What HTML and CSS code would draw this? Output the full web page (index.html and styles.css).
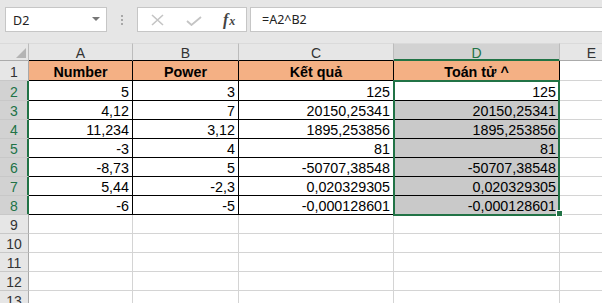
FILE: index.html
```html
<!DOCTYPE html>
<html lang="vi">
<head>
  <meta charset="UTF-8">
  <title>Toán tử ^</title>
  <link rel="stylesheet" href="styles.css">
</head>
<body>
  <div class="formula-bar">
    <div class="name-box">
      <span>D2</span>
      <span class="caret"></span>
    </div>
    <div class="grip"><i></i><i></i><i></i></div>
    <div class="fx-buttons">
      <svg width="13" height="12" viewBox="0 0 13 12"><path d="M1 1 L12 11 M12 1 L1 11" stroke="#c4c4c4" stroke-width="1.6" fill="none"/></svg>
      <svg width="16" height="10" viewBox="0 0 16 10"><path d="M1 5 L5.5 9 L15 1" stroke="#c4c4c4" stroke-width="1.8" fill="none"/></svg>
      <span class="fx"><i>f</i><span class="x">x</span></span>
    </div>
    <div class="formula">=A2^B2</div>
  </div>

  <div class="sheet">
    <!-- column headers -->
    <div class="corner"><span class="tri"></span></div>
    <div class="ch tb">A</div>
    <div class="ch tb">B</div>
    <div class="ch tb">C</div>
    <div class="ch tb on">D</div>
    <div class="ch">E</div>

    <div class="rh">1</div>
    <div class="cell tb hd">Number</div>
    <div class="cell tb hd">Power</div>
    <div class="cell tb hd">Kết quả</div>
    <div class="cell tb hd">Toán tử ^</div>
    <div class="cell"></div>

    <div class="rh on">2</div>
    <div class="cell tb n">5</div>
    <div class="cell tb n">3</div>
    <div class="cell tb n">125</div>
    <div class="cell tb n">125</div>
    <div class="cell"></div>

    <div class="rh on">3</div>
    <div class="cell tb n">4,12</div>
    <div class="cell tb n">7</div>
    <div class="cell tb n">20150,25341</div>
    <div class="cell tb n sel">20150,25341</div>
    <div class="cell"></div>

    <div class="rh on">4</div>
    <div class="cell tb n">11,234</div>
    <div class="cell tb n">3,12</div>
    <div class="cell tb n">1895,253856</div>
    <div class="cell tb n sel">1895,253856</div>
    <div class="cell"></div>

    <div class="rh on">5</div>
    <div class="cell tb n">-3</div>
    <div class="cell tb n">4</div>
    <div class="cell tb n">81</div>
    <div class="cell tb n sel">81</div>
    <div class="cell"></div>

    <div class="rh on">6</div>
    <div class="cell tb n">-8,73</div>
    <div class="cell tb n">5</div>
    <div class="cell tb n">-50707,38548</div>
    <div class="cell tb n sel">-50707,38548</div>
    <div class="cell"></div>

    <div class="rh on">7</div>
    <div class="cell tb n">5,44</div>
    <div class="cell tb n">-2,3</div>
    <div class="cell tb n">0,020329305</div>
    <div class="cell tb n sel">0,020329305</div>
    <div class="cell"></div>

    <div class="rh on">8</div>
    <div class="cell tb n">-6</div>
    <div class="cell tb n">-5</div>
    <div class="cell tb n">-0,000128601</div>
    <div class="cell tb n sel">-0,000128601</div>
    <div class="cell"></div>

    <div class="rh">9</div>
    <div class="cell"></div><div class="cell"></div><div class="cell"></div><div class="cell"></div><div class="cell"></div>
    <div class="rh">10</div>
    <div class="cell"></div><div class="cell"></div><div class="cell"></div><div class="cell"></div><div class="cell"></div>
    <div class="rh">11</div>
    <div class="cell"></div><div class="cell"></div><div class="cell"></div><div class="cell"></div><div class="cell"></div>
    <div class="rh">12</div>
    <div class="cell"></div><div class="cell"></div><div class="cell"></div><div class="cell"></div><div class="cell"></div>
    <div class="rh">13</div>
    <div class="cell"></div><div class="cell"></div><div class="cell"></div><div class="cell"></div><div class="cell"></div>

    <!-- selection D2:D8 -->
    <div class="selection"></div>
    <div class="fill-handle"></div>
  </div>
</body>
</html>
```

FILE: styles.css
```css
:root {
  --bar-bg: #e6e6e6;
  --box-border: #c6c6c6;
  --grid: #d4d4d4;
  --head-line: #bcbcbc;
  --excel-green: #217346;
  --head-on: #d2d2d2;
  --orange: #f4b084;
  --sel-gray: #c9c9c9;
}

* {
  box-sizing: border-box;
  margin: 0;
  padding: 0;
}

body {
  width: 602px;
  height: 303px;
  overflow: hidden;
  background: #fff;
  font-family: 'Liberation Sans', Arial, sans-serif;
  color: #000;
}

/* formula bar */
.formula-bar {
  display: flex;
  align-items: flex-start;
  height: 43px;
  padding: 7px 0 0 5px;
  background: var(--bar-bg);
  font-family: 'Noto Sans', 'Open Sans', sans-serif;
  font-size: 12.5px;
  color: #222;
}

.name-box {
  display: flex;
  align-items: center;
  justify-content: space-between;
  width: 102px;
  height: 25px;
  padding: 1px 6px 0 7px;
  background: #fff;
  border: 1px solid var(--box-border);
}

.caret {
  width: 0;
  height: 0;
  border-left: 4px solid transparent;
  border-right: 4px solid transparent;
  border-top: 4px solid #777;
  margin-top: -2px;
}

.grip {
  display: flex;
  flex-direction: column;
  align-items: center;
  gap: 2px;
  width: 30px;
  padding-top: 8px;
}

.grip i {
  width: 2px;
  height: 2px;
  background: #a8a8a8;
}

.fx-buttons {
  display: flex;
  align-items: center;
  width: 110px;
  height: 25px;
  padding: 0 0 0 13px;
  background: #fff;
  border: 1px solid var(--box-border);
  gap: 22px;
}

.fx-buttons svg {
  display: block;
}

.fx-buttons svg + svg {
  margin-top: 2px;
}

.fx {
  font-family: 'Liberation Serif', 'Times New Roman', serif;
  font-style: italic;
  font-size: 16px;
  color: #444;
  margin-left: -1px;
  margin-top: 1px;
}

.fx i {
  font-weight: bold;
}

.fx .x {
  font-size: 12px;
  font-weight: bold;
  margin-left: 1px;
}

.formula {
  flex: 1;
  height: 25px;
  margin-left: 3px;
  padding: 3px 0 0 11px;
  background: #fff;
  border: 1px solid var(--box-border);
  border-right: none;
}

/* sheet grid */
.sheet {
  position: relative;
  display: grid;
  grid-template-columns: 29px 104px 106px 155px 166px 64px;
  grid-template-rows: 18px 20px 20px repeat(11, 19px);
  font-size: 14.3px;
}

.corner,
.ch,
.rh {
  background: var(--bar-bg);
  font-size: 14px;
  color: #333;
}

.corner {
  position: relative;
  border-right: 1px solid var(--head-line);
  border-bottom: 1px solid #ababab;
  border-top: 1px solid #dadada;
}

.tri {
  position: absolute;
  right: 2px;
  bottom: 2px;
  width: 0;
  height: 0;
  border-left: 10px solid transparent;
  border-bottom: 10px solid #b4b4b4;
}

.ch {
  display: flex;
  align-items: center;
  justify-content: center;
  padding-top: 1px;
  border-top: 1px solid #dadada;
  border-right: 1px solid var(--head-line);
  border-bottom: 1px solid #ababab;
}

.ch.tb {
  border-bottom-color: #000;
}

.ch.on {
  background: var(--head-on);
  color: var(--excel-green);
  border-bottom-color: var(--excel-green);
  box-shadow: inset 0 -1px 0 var(--excel-green);
}

.rh {
  display: flex;
  align-items: center;
  justify-content: center;
  padding-top: 2px;
  border-right: 1px solid #a8a8a8;
  border-bottom: 1px solid #c8c8c8;
}

.rh.on {
  background: var(--head-on);
  color: var(--excel-green);
  border-right-color: var(--excel-green);
  box-shadow: inset -1px 0 0 var(--excel-green);
}

.cell {
  display: flex;
  align-items: flex-end;
  white-space: nowrap;
  overflow: hidden;
  border-right: 1px solid var(--grid);
  border-bottom: 1px solid var(--grid);
}

.cell.tb {
  border-color: #000;
}

.cell.hd {
  justify-content: center;
  font-weight: bold;
  background: var(--orange);
}

.cell.n {
  justify-content: flex-end;
  padding-right: 3px;
}

.cell.sel {
  background: var(--sel-gray);
}

.selection {
  position: absolute;
  left: 393px;
  top: 37px;
  width: 167px;
  height: 136px;
  border: 2px solid var(--excel-green);
  pointer-events: none;
}

.fill-handle {
  position: absolute;
  left: 556px;
  top: 167px;
  width: 7px;
  height: 7px;
  background: var(--excel-green);
  border: 1px solid #fff;
}
```
